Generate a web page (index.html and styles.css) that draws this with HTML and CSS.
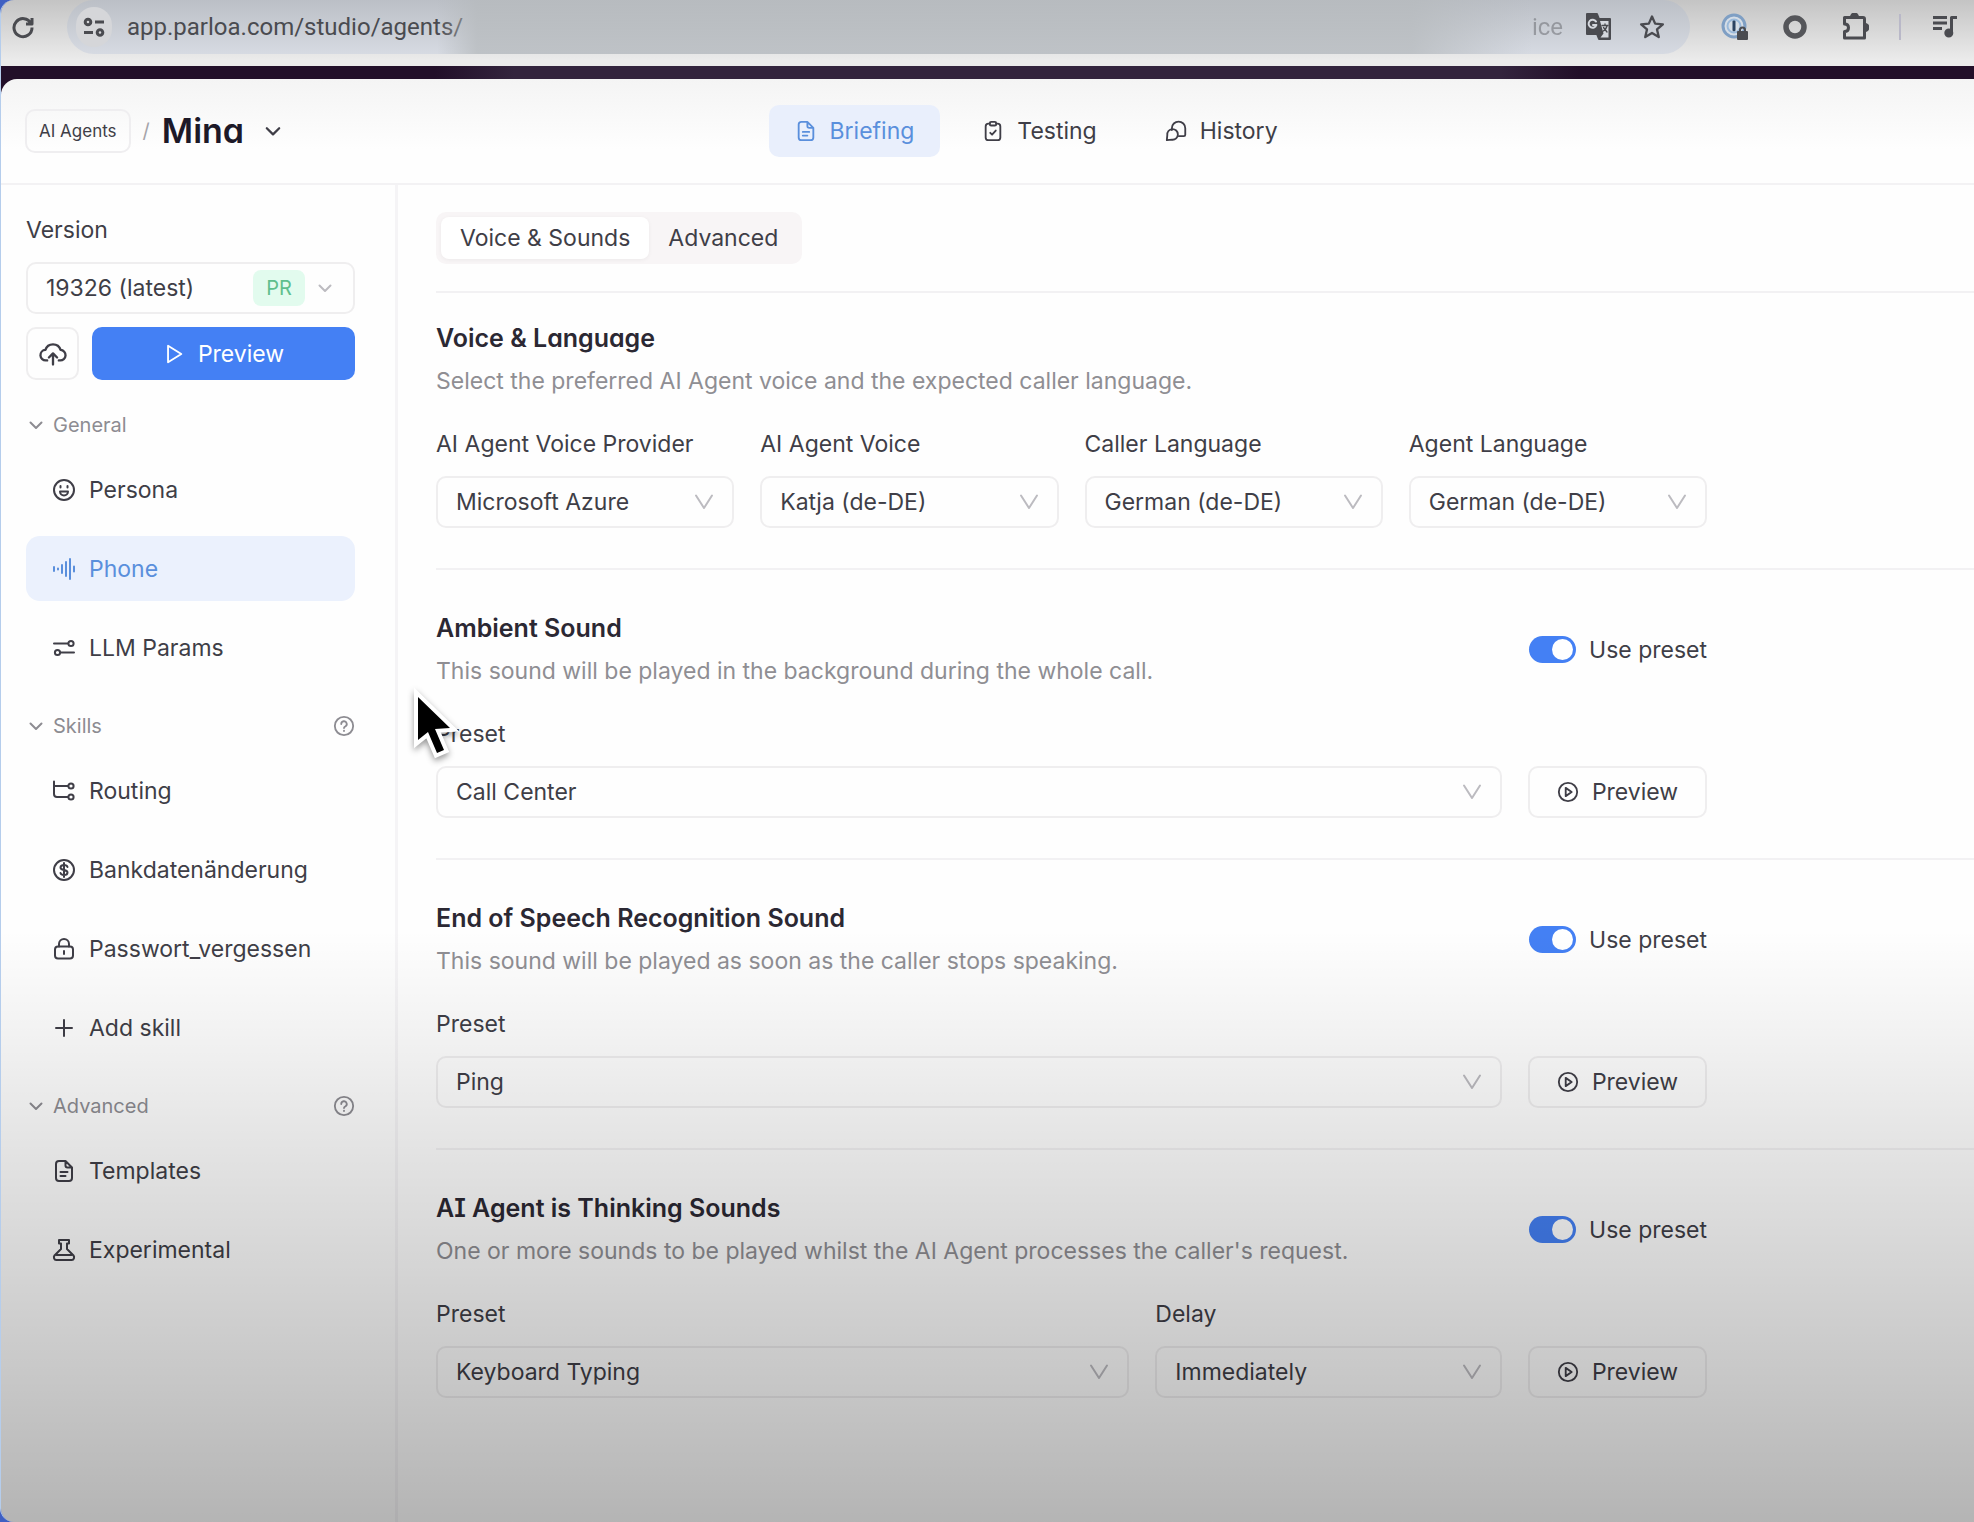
FILE: index.html
```html
<!DOCTYPE html>
<html lang="en">
<head>
<meta charset="utf-8">
<meta name="viewport" content="width=device-width, initial-scale=1">
<title>Mina – Phone</title>
<link rel="stylesheet" href="styles.css">
</head>
<body>
<svg class="sprite" aria-hidden="true">
  <symbol id="i-down" viewBox="0 0 16 16"><path d="M2.5 5.5 8 11l5.500-5.500"/></symbol>
  <symbol id="i-vee" viewBox="0 0 20 20"><path d="M2 3.500 10 16l8-12.500"/></symbol>
  <symbol id="i-doc" viewBox="0 0 24 24"><path d="M13.500 2H7a3 3 0 0 0-3 3v14a3 3 0 0 0 3 3h10a3 3 0 0 0 3-3V8.500zM13.500 2v4.500a2 2 0 0 0 2 2H20M8.500 13h7M8.500 17h5"/></symbol>
  <symbol id="i-clip" viewBox="0 0 24 24"><path d="M8.500 4H7a3 3 0 0 0-3 3v12a3 3 0 0 0 3 3h10a3 3 0 0 0 3-3V7a3 3 0 0 0-3-3h-1.500M9 14l2 2 4-4.500"/><rect x="8.500" y="2" width="7" height="4" rx="1.500"/></symbol>
  <symbol id="i-chat" viewBox="0 0 24 24"><path d="M7.500 11V9a7.300 7.300 0 0 1 14.600 0v7a1.500 1.500 0 0 1-1.500 1.500H15"/><path d="M2 22l.5-5.500a5.800 5.800 0 1 1 5.300 5z"/></symbol>
  <symbol id="i-cloud" viewBox="0 0 24 24"><path d="M7 17.500H6a4.500 4.500 0 0 1-.5-9 6.800 6.800 0 0 1 13 0 4.500 4.500 0 0 1-.5 9h-1M12 21v-9M8.500 15 12 11.500l3.500 3.500"/></symbol>
  <symbol id="i-play" viewBox="0 0 24 24"><path d="M5.500 3v18L20 12z"/></symbol>
  <symbol id="i-smile" viewBox="0 0 24 24"><circle cx="12" cy="12" r="10"/><path d="M8 13.500a4 4 0 0 0 8 0zM8.500 8v1.500M15.500 8v1.500"/></symbol>
  <symbol id="i-wave" viewBox="0 0 24 24"><path d="M2 10v4M6 11.500v1M10 8v8M14 5v14M18 2v20M22 9.500v5"/></symbol>
  <symbol id="i-sliders" viewBox="0 0 24 24"><path d="M2 7.500h14M22 16.500H9"/><circle cx="19" cy="7.500" r="2.600"/><circle cx="5.500" cy="16.500" r="2.600"/></symbol>
  <symbol id="i-help" viewBox="0 0 24 24"><circle cx="12" cy="12" r="10"/><path d="M9 9.800a3 3 0 1 1 4.300 2.700c-.9.500-1.300.9-1.300 1.700M12 17v.5"/></symbol>
  <symbol id="i-route" viewBox="0 0 24 24"><path d="M2 2.500V15a3 3 0 0 0 3 3h11M2 7h14"/><circle cx="19" cy="7" r="2.600"/><circle cx="19" cy="18" r="2.600"/></symbol>
  <symbol id="i-dollar" viewBox="0 0 24 24"><circle cx="12" cy="12" r="10"/><path d="M15.500 9c-.4-1.300-1.700-2-3.500-2-2 0-3.500.9-3.500 2.500 0 3.500 7 1.500 7 5 0 1.600-1.500 2.500-3.500 2.500-1.800 0-3.100-.7-3.500-2M12 5v14"/></symbol>
  <symbol id="i-lock" viewBox="0 0 24 24"><rect x="3" y="9.500" width="18" height="12" rx="3"/><path d="M7 9.500V7a5 5 0 0 1 10 0v2.500M12 14v3"/></symbol>
  <symbol id="i-plus" viewBox="0 0 24 24"><path d="M12 4v16M4 12h16"/></symbol>
  <symbol id="i-flask" viewBox="0 0 24 24"><path d="M7 2h10v3.500h-2V11l6.500 6.500c1.300 1.600.4 4.500-1.700 4.500H4.200c-2.100 0-3-2.900-1.700-4.500L9 11V5.500H7zM4.500 17h15"/></symbol>
  <symbol id="i-playc" viewBox="0 0 24 24"><circle cx="12" cy="12" r="10"/><path d="M9.500 7.500v9l6.500-4.500z"/></symbol>
</svg>

<div class="window">
  <header class="browser">
    <button class="browser-btn" aria-label="Reload"><svg viewBox="0 0 24 24" class="ico ico-24 heavy"><path d="M20 8.500A9 9 0 1 0 21 12.500M21 3v6h-6"/></svg></button>
    <div class="address">
      <button class="site-info" aria-label="Site information"><svg viewBox="0 0 24 24" class="ico ico-24 heavy"><circle cx="6" cy="7" r="2.800"/><path d="M13 7h9M2 17.500h9"/><circle cx="18" cy="17.500" r="2.800"/></svg></button>
      <span class="url">app.parloa.com/studio/agents/</span>
      <span class="url-smear"></span>
      <span class="url url-end">ice</span>
      <button class="browser-btn" aria-label="Translate"><svg viewBox="0 0 28 28" class="ico ico-28"><path class="fill" d="M2 1h10l2 5h11v20H14l-2-5H2z"/><path class="paper" d="M15 8h8.500v16.500h-8l3-4z"/><path class="lens" d="M11 8.500a4 4 0 1 0 .4 3.500H8"/><path d="M17 12.500h6M20 11v1.500M22 13c-.6 2.500-2.500 4.500-4.500 5.500M18.500 14.500l3.500 4.500" stroke-width="1.300"/></svg></button>
      <button class="browser-btn" aria-label="Bookmark"><svg viewBox="0 0 24 24" class="ico ico-28"><path d="m12 3 2.700 6.100 6.600.6-5 4.400 1.500 6.500-5.800-3.500-5.800 3.500 1.500-6.500-5-4.400 6.600-.6z"/></svg></button>
    </div>
    <div class="extensions">
      <button class="browser-btn" aria-label="Password manager"><svg viewBox="0 0 28 28" class="ico ico-28"><circle cx="13" cy="13" r="11" fill="#d5dde6" stroke="#7f9fc4" stroke-width="3"/><path d="M13 8v9" stroke="#2b4361" stroke-width="3"/><circle cx="13" cy="13" r="6.500" stroke="#9ab9da"/><path class="fill" d="M17 19h9v7h-9z"/><path d="M19 19v-2a2.500 2.500 0 0 1 5 0v2"/></svg></button>
      <button class="browser-btn" aria-label="Extension"><svg viewBox="0 0 28 28" class="ico ico-28"><circle cx="14" cy="14" r="9" stroke="#55565a" stroke-width="5.500"/></svg></button>
      <button class="browser-btn" aria-label="Extensions"><svg viewBox="0 0 28 28" class="ico ico-28 heavy"><path d="M3.500 4.500H22a1.500 1.500 0 0 1 1.500 1.500v19H3.500v-6.500c3 0 4-1.500 4-3.700s-1-3.700-4-3.700z"/><path d="M10.500 4a3 3 0 0 1 6 0zM24 11.500a3 3 0 0 1 0 6z" class="fill"/></svg></button>
      <span class="rule"></span>
      <button class="browser-btn" aria-label="Media"><svg viewBox="0 0 28 28" class="ico ico-28 heavy"><path d="M2 4.500h14M2 10h14M2 15.500h9M20.500 20V4.500H26"/><circle class="fill" cx="17.800" cy="20" r="3"/></svg></button>
    </div>
  </header>
  <div class="strip"></div>

  <div class="app">
    <header class="topbar">
      <div class="crumbs">
        <a class="crumb" href="#agents">AI Agents</a>
        <span class="slash">/</span>
        <h1>Mina</h1>
        <button class="plain" aria-label="Switch agent"><svg class="ico ico-18"><use href="#i-down"/></svg></button>
      </div>
      <nav class="tabs">
        <a class="tab active" href="#briefing"><svg class="ico ico-22"><use href="#i-doc"/></svg>Briefing</a>
        <a class="tab" href="#testing"><svg class="ico ico-22"><use href="#i-clip"/></svg>Testing</a>
        <a class="tab" href="#history"><svg class="ico ico-22"><use href="#i-chat"/></svg>History</a>
      </nav>
    </header>

    <div class="body">
      <aside class="sidebar">
        <label class="label" for="version">Version</label>
        <div class="select version">
          <select id="version"><option>19326 (latest)</option></select>
          <span class="badge">PR</span>
          <svg class="ico ico-16"><use href="#i-down"/></svg>
        </div>
        <div class="actions">
          <button class="btn square" aria-label="Publish"><svg class="ico ico-28"><use href="#i-cloud"/></svg></button>
          <button class="btn primary"><svg class="ico ico-22"><use href="#i-play"/></svg>Preview</button>
        </div>

        <div class="group"><svg class="ico ico-16"><use href="#i-down"/></svg>General</div>
        <nav class="items">
          <a class="item" href="#persona"><svg class="ico ico-24"><use href="#i-smile"/></svg>Persona</a>
          <a class="item active" href="#phone"><svg class="ico ico-24"><use href="#i-wave"/></svg>Phone</a>
          <a class="item" href="#llm"><svg class="ico ico-24"><use href="#i-sliders"/></svg>LLM Params</a>
        </nav>

        <div class="group"><svg class="ico ico-16"><use href="#i-down"/></svg>Skills<svg class="ico ico-22 help"><use href="#i-help"/></svg></div>
        <nav class="items">
          <a class="item" href="#routing"><svg class="ico ico-24"><use href="#i-route"/></svg>Routing</a>
          <a class="item" href="#bank"><svg class="ico ico-24"><use href="#i-dollar"/></svg>Bankdatenänderung</a>
          <a class="item" href="#password"><svg class="ico ico-24"><use href="#i-lock"/></svg>Passwort_vergessen</a>
          <a class="item" href="#add"><svg class="ico ico-24"><use href="#i-plus"/></svg>Add skill</a>
        </nav>

        <div class="group"><svg class="ico ico-16"><use href="#i-down"/></svg>Advanced<svg class="ico ico-22 help"><use href="#i-help"/></svg></div>
        <nav class="items">
          <a class="item" href="#templates"><svg class="ico ico-24"><use href="#i-doc"/></svg>Templates</a>
          <a class="item" href="#experimental"><svg class="ico ico-24"><use href="#i-flask"/></svg>Experimental</a>
        </nav>
      </aside>

      <main class="main">
        <div class="segmented">
          <button class="seg active">Voice &amp; Sounds</button>
          <button class="seg">Advanced</button>
        </div>

        <section class="section">
          <div class="inner">
            <div class="section-head">
              <div>
                <h2>Voice &amp; Language</h2>
                <p>Select the preferred AI Agent voice and the expected caller language.</p>
              </div>
            </div>
            <div class="row four">
              <div class="field"><label class="label" for="provider">AI Agent Voice Provider</label><div class="select"><select id="provider"><option>Microsoft Azure</option></select><svg class="ico ico-20"><use href="#i-vee"/></svg></div></div>
              <div class="field"><label class="label" for="voice">AI Agent Voice</label><div class="select"><select id="voice"><option>Katja (de-DE)</option></select><svg class="ico ico-20"><use href="#i-vee"/></svg></div></div>
              <div class="field"><label class="label" for="caller">Caller Language</label><div class="select"><select id="caller"><option>German (de-DE)</option></select><svg class="ico ico-20"><use href="#i-vee"/></svg></div></div>
              <div class="field"><label class="label" for="agent">Agent Language</label><div class="select"><select id="agent"><option>German (de-DE)</option></select><svg class="ico ico-20"><use href="#i-vee"/></svg></div></div>
            </div>
          </div>
        </section>

        <section class="section">
          <div class="inner">
            <div class="section-head">
              <div>
                <h2>Ambient Sound</h2>
                <p>This sound will be played in the background during the whole call.</p>
              </div>
              <label class="toggle"><input type="checkbox" checked>Use preset</label>
            </div>
            <div class="row">
              <div class="field"><label class="label" for="ambient">Preset</label><div class="select"><select id="ambient"><option>Call Center</option></select><svg class="ico ico-20"><use href="#i-vee"/></svg></div></div>
              <button class="btn preview"><svg class="ico ico-22"><use href="#i-playc"/></svg>Preview</button>
            </div>
          </div>
        </section>

        <section class="section">
          <div class="inner">
            <div class="section-head">
              <div>
                <h2>End of Speech Recognition Sound</h2>
                <p>This sound will be played as soon as the caller stops speaking.</p>
              </div>
              <label class="toggle"><input type="checkbox" checked>Use preset</label>
            </div>
            <div class="row">
              <div class="field"><label class="label" for="eos">Preset</label><div class="select"><select id="eos"><option>Ping</option></select><svg class="ico ico-20"><use href="#i-vee"/></svg></div></div>
              <button class="btn preview"><svg class="ico ico-22"><use href="#i-playc"/></svg>Preview</button>
            </div>
          </div>
        </section>

        <section class="section">
          <div class="inner">
            <div class="section-head">
              <div>
                <h2>AI Agent is Thinking Sounds</h2>
                <p>One or more sounds to be played whilst the AI Agent processes the caller's request.</p>
              </div>
              <label class="toggle"><input type="checkbox" checked>Use preset</label>
            </div>
            <div class="row">
              <div class="field wide"><label class="label" for="thinking">Preset</label><div class="select"><select id="thinking"><option>Keyboard Typing</option></select><svg class="ico ico-20"><use href="#i-vee"/></svg></div></div>
              <div class="field"><label class="label" for="delay">Delay</label><div class="select"><select id="delay"><option>Immediately</option></select><svg class="ico ico-20"><use href="#i-vee"/></svg></div></div>
              <button class="btn preview"><svg class="ico ico-22"><use href="#i-playc"/></svg>Preview</button>
            </div>
          </div>
        </section>
      </main>
    </div>
  </div>
  <div class="shade"></div>
</div>
<svg class="cursor" viewBox="0 0 48 74" aria-hidden="true"><path d="M8 11v43l10-8 9 21 7-3-9-21 15-1z"/></svg>
</body>
</html>
```

FILE: styles.css
```css
* { box-sizing: border-box; }

body {
  margin: 0;
  background: #3f5fc2;
  color: #3f3e47;
  font: 400 23px/28px Inter, "Liberation Sans", sans-serif;
}

h1, h2, p { margin: 0; }
a { color: inherit; text-decoration: none; }
button, select, input { font: inherit; color: inherit; margin: 0; }
button { border: 0; background: none; padding: 0; cursor: pointer; }

.sprite { display: none; }

.ico {
  flex: none;
  fill: none;
  stroke: currentColor;
  stroke-width: 2;
  stroke-linecap: round;
  stroke-linejoin: round;
}
.ico .fill { fill: currentColor; }
.ico .paper { fill: #d5d8de; stroke: none; }
.ico .lens { stroke: #d5d8de; }
.ico.heavy { stroke-width: 3; stroke-linecap: butt; }
.ico-16 { width: 16px; height: 16px; }
.ico-18 { width: 18px; height: 18px; }
.ico-20 { width: 20px; height: 20px; }
.ico-22 { width: 22px; height: 22px; }
.ico-24 { width: 24px; height: 24px; }
.ico-28 { width: 28px; height: 28px; }

.window {
  position: relative;
  display: flex;
  flex-direction: column;
  min-height: 100vh;
  overflow: hidden;
  border-radius: 14px 0 0 14px;
  border-left: 1px solid #b5cdec;
}

/* Browser toolbar */
.browser {
  display: flex;
  align-items: center;
  height: 66px;
  padding: 0 15px 12px 10px;
  background: linear-gradient(#c4c4c4, #ebebeb 60px);
  color: #4a4b50;
}
.browser-btn { display: flex; }
.address {
  display: flex;
  flex: 1;
  align-items: center;
  align-self: stretch;
  margin-left: 32px;
  padding: 0 24px 0 9px;
  border-radius: 27px;
  background: linear-gradient(#bbbfc6, #d6dae2);
}
.address .browser-btn + .browser-btn { margin-left: 25px; }
.site-info {
  display: flex;
  align-items: center;
  justify-content: center;
  width: 36px;
  height: 40px;
  border-radius: 20px;
  background: #d5d6d9;
}
.url {
  margin-left: 15px;
  font: 400 24px/32px Roboto, sans-serif;
  white-space: nowrap;
}
.url-smear {
  position: relative;
  flex: 1;
  align-self: stretch;
  margin-left: -26px;
  background: linear-gradient(90deg, #b6babd00, #b6babd 40px calc(100% - 120px), #b6babd00);
  opacity: .75;
}
.url-end { margin: 0 22px 0 0; opacity: .4; }
.extensions { display: flex; align-items: center; gap: 32px; margin-left: 31px; }
.rule { width: 2px; height: 26px; margin: 0 -2px; background: #b9b8c8; }
.strip {
  height: 26px;
  margin-bottom: -13px;
  background: linear-gradient(90deg, #220f29 22%, #33243d 26%, #33243d 76%, #220f29 80%);
}

/* Application */
.app {
  display: flex;
  flex: 1;
  flex-direction: column;
  border-top-left-radius: 16px;
  background: linear-gradient(#f4f4f4, #fefefe 70px);
}
.topbar {
  display: flex;
  align-items: center;
  gap: 12px;
  height: 106px;
  padding: 0 24px;
  border-bottom: 2px solid #f3f2f4;
}
.crumbs {
  display: flex;
  flex: 0 0 38%;
  align-items: center;
}
.crumb {
  display: flex;
  align-items: center;
  height: 44px;
  padding: 0 12px;
  border: 2px solid #efeef0;
  border-radius: 10px;
  font-size: 17px;
}
.slash { margin: 0 12px; color: #a5a4aa; font-size: 20px; }
h1 {
  color: #1d1928;
  font: 600 34px/44px Inter, sans-serif;
  font-feature-settings: "cv11", "cv08";
}
.plain { display: flex; margin-left: 20px; }
.tabs { display: flex; gap: 16px; }
.tab {
  display: flex;
  align-items: center;
  gap: 13px;
  height: 52px;
  padding: 0 26px;
  border-radius: 10px;
}
.tab.active { background: #e9effc; color: #5a8fdc; }

.body { display: flex; flex: 1; }

/* Sidebar */
.sidebar {
  flex: 0 0 397px;
  padding: 31px 40px 30px 25px;
  border-right: 3px solid #f5f4f6;
}
.label { display: block; line-height: 28px; }
.select { display: grid; align-items: center; height: 52px; }
.select > * { grid-area: 1 / 1; }
.select select {
  width: 100%;
  height: 52px;
  padding: 0 18px;
  border: 2px solid #efeeef;
  border-radius: 10px;
  appearance: none;
  background: transparent;
}
.select .ico {
  justify-self: end;
  margin-right: 20px;
  color: #bcbbc0;
  pointer-events: none;
}
.version { margin-top: 18px; }
.version .ico { margin-right: 22px; }
.badge {
  justify-self: end;
  margin-right: 50px;
  padding: 4px 13px;
  border-radius: 8px;
  background: #e2fbee;
  color: #5fbf8d;
  font-size: 20px;
  pointer-events: none;
}
.actions { display: flex; gap: 13px; margin-top: 13px; }
.btn {
  display: flex;
  align-items: center;
  justify-content: center;
  gap: 13px;
  height: 53px;
  border: 2px solid #efeeef;
  border-radius: 10px;
}
.btn.square { flex: 0 0 53px; }
.btn.primary { flex: 1; border: 0; background: #4480f4; color: #fff; }
.group {
  display: flex;
  align-items: center;
  gap: 9px;
  height: 28px;
  margin: 31px 0 18px;
  padding-left: 2px;
  color: #8d8c92;
  font-size: 20px;
}
.items + .group { margin-top: 32px; }
.help { margin-left: auto; }
.items { display: flex; flex-direction: column; gap: 14px; }
.item {
  display: flex;
  align-items: center;
  gap: 13px;
  height: 65px;
  padding: 0 26px;
  border-radius: 14px;
}
.item.active { background: #ebf1fd; color: #5a8fdc; }

/* Main column */
.main { flex: 1; min-width: 0; padding: 27px 0 80px 38px; }
.segmented {
  display: flex;
  width: fit-content;
  padding: 5px;
  border-radius: 10px;
  background: #f8f5f6;
}
.seg { height: 42px; padding: 0 19px; border-radius: 8px; }
.seg.active { background: #fff; box-shadow: 0 1px 4px #0000000d; }
.segmented + .section { margin-top: 27px; }
.section { border-top: 2px solid #f2f1f3; padding: 31px 0 40px; }
.section + .section { padding-top: 44px; }
.inner { width: 83%; max-width: 1271px; }
.section-head { display: flex; align-items: center; justify-content: space-between; }
h2 {
  color: #2b2833;
  font: 600 25px/28px Inter, sans-serif;
  font-feature-settings: "cv11", "cv08";
}
p { margin-top: 15px; color: #8f8e93; }
.toggle { display: flex; align-items: center; gap: 13px; }
.toggle input {
  appearance: none;
  width: 47px;
  height: 27px;
  padding: 3px;
  border-radius: 14px;
  background: #4480f4;
}
.toggle input::before {
  content: "";
  display: block;
  width: 21px;
  height: 21px;
  margin-left: 20px;
  border-radius: 50%;
  background: #fff;
}
.row { display: flex; align-items: flex-end; gap: 26px; margin-top: 35px; }
.field { flex: 1; min-width: 0; }
.field.wide { flex: 2; }
.field .select { margin-top: 18px; }
.btn.preview { flex: 0 0 179px; height: 52px; }

/* Darkening towards the bottom edge */
.shade {
  position: absolute;
  inset: auto 0 0 0;
  height: 592px;
  background: linear-gradient(#0000, #0000000e 20%, #00000021 45%, #00000038 77%, #0000004a);
  pointer-events: none;
}

.cursor {
  position: absolute;
  left: 410px;
  top: 686px;
  width: 48px;
  height: 74px;
  overflow: visible;
  filter: drop-shadow(0 3px 3px #0006);
  fill: #000;
  stroke: #fff;
  stroke-width: 8px;
  paint-order: stroke;
  pointer-events: none;
}
```
